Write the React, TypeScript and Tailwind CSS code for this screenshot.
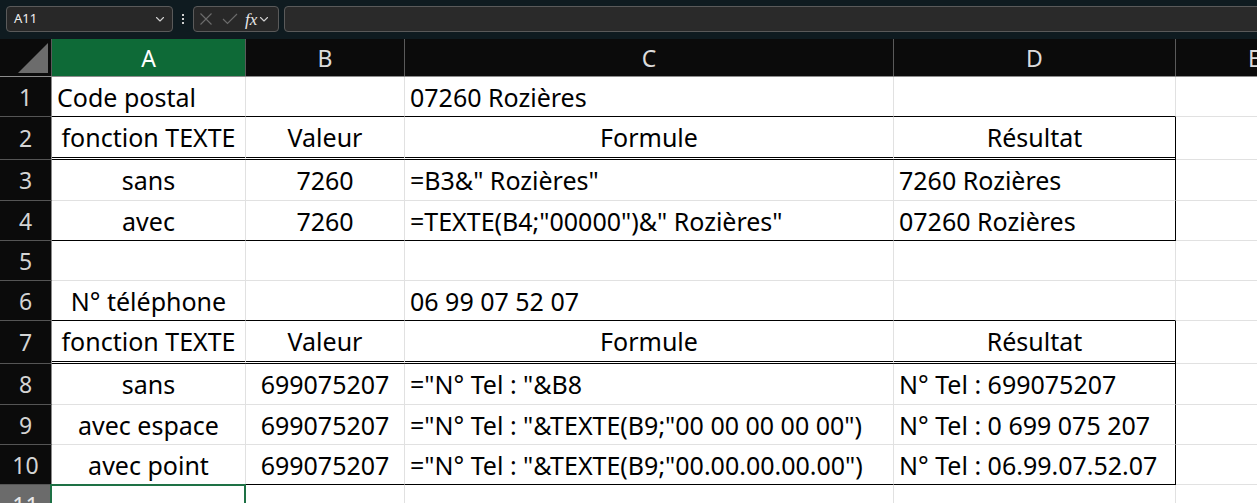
import React from "react";

const FONT = { fontFamily: '"Noto Sans", "Liberation Sans", sans-serif' };

type B = "g" | "k" | "d";
const BOTTOM: Record<B, string> = {
  g: "border-b border-b-[#e1e1e1]",
  k: "border-b border-b-black",
  d: "border-b-[3px] border-double border-b-black",
};
const RIGHT: Record<"g" | "k", string> = {
  g: "border-r border-r-[#e1e1e1]",
  k: "border-r border-r-black",
};
const WIDTHS = ["w-[194px]", "w-[159px]", "w-[489px]", "w-[282px]"];

type CellDef = { t?: string; a?: "l" | "c" };

function Cell({ def, w, b, r }: { def?: CellDef; w: string; b: B; r: "g" | "k" }) {
  const align = def?.a === "c" ? "justify-center" : "justify-start pl-[5px]";
  return (
    <div className={`${w} shrink-0 h-full flex items-center pt-[2px] ${align} ${BOTTOM[b]} ${RIGHT[r]} whitespace-nowrap overflow-visible text-black text-[25px]`}>
      {def?.t ?? ""}
    </div>
  );
}

function RowHead({ n, sel }: { n: number; sel?: boolean }) {
  return (
    <div
      className={`w-[52px] shrink-0 h-full flex items-center justify-center pt-[1px] border-r border-r-[#8a8a8a] border-b border-b-[#555555] text-[23px] ${
        sel ? "bg-[#6b6b6b] text-[#e8e8e8]" : "bg-[#0b0b0b] text-[#d4d4d4]"
      }`}
    >
      {n}
    </div>
  );
}

type RowDef = { h: string; b: B; rk: boolean; cells: (CellDef | undefined)[] };

const rows: RowDef[] = [
  { h: "h-[40px]", b: "k", rk: false, cells: [{ t: "Code postal" }, undefined, { t: "07260 Rozières" }, undefined] },
  { h: "h-[43px]", b: "d", rk: true, cells: [{ t: "fonction TEXTE", a: "c" }, { t: "Valeur", a: "c" }, { t: "Formule", a: "c" }, { t: "Résultat", a: "c" }] },
  { h: "h-[41px]", b: "g", rk: true, cells: [{ t: "sans", a: "c" }, { t: "7260", a: "c" }, { t: '=B3&" Rozières"' }, { t: "7260 Rozières" }] },
  { h: "h-[40px]", b: "k", rk: true, cells: [{ t: "avec", a: "c" }, { t: "7260", a: "c" }, { t: '=TEXTE(B4;"00000")&" Rozières"' }, { t: "07260 Rozières" }] },
  { h: "h-[40px]", b: "g", rk: false, cells: [undefined, undefined, undefined, undefined] },
  { h: "h-[40px]", b: "k", rk: false, cells: [{ t: "N° téléphone", a: "c" }, undefined, { t: "06 99 07 52 07" }, undefined] },
  { h: "h-[43px]", b: "d", rk: true, cells: [{ t: "fonction TEXTE", a: "c" }, { t: "Valeur", a: "c" }, { t: "Formule", a: "c" }, { t: "Résultat", a: "c" }] },
  { h: "h-[41px]", b: "g", rk: true, cells: [{ t: "sans", a: "c" }, { t: "699075207", a: "c" }, { t: '="N° Tel : "&B8' }, { t: "N° Tel : 699075207" }] },
  { h: "h-[40px]", b: "g", rk: true, cells: [{ t: "avec espace", a: "c" }, { t: "699075207", a: "c" }, { t: '="N° Tel : "&TEXTE(B9;"00 00 00 00 00")' }, { t: "N° Tel : 0 699 075 207" }] },
  { h: "h-[40px]", b: "k", rk: true, cells: [{ t: "avec point", a: "c" }, { t: "699075207", a: "c" }, { t: '="N° Tel : "&TEXTE(B9;"00.00.00.00.00")' }, { t: "N° Tel : 06.99.07.52.07" }] },
];

function Chevron({ className }: { className?: string }) {
  return (
    <svg className={className} width="12" height="12" viewBox="0 0 12 12" fill="none">
      <path d="M2.5 4.5 L6 8 L9.5 4.5" stroke="#d0d0d0" strokeWidth="1.1" strokeLinecap="round" strokeLinejoin="round" />
    </svg>
  );
}

function Toolbar() {
  return (
    <div className="h-[39px] bg-[#0f1b20] flex items-start pt-[6px] pl-[6px] overflow-hidden">
      <div className="w-[167px] h-[26px] shrink-0 rounded-[4px] border border-[#5a5a5a] bg-[#282828] flex items-center justify-between pl-[7px] pr-[6px]">
        <span className="text-[13px] text-[#f0f0f0]">A11</span>
        <Chevron />
      </div>
      <div className="w-[20px] h-[26px] shrink-0 flex flex-col items-center justify-center gap-[2px]">
        <span className="w-[2px] h-[2px] bg-[#d0d0d0]" />
        <span className="w-[2px] h-[2px] bg-[#d0d0d0]" />
        <span className="w-[2px] h-[2px] bg-[#d0d0d0]" />
      </div>
      <div className="w-[86px] h-[26px] shrink-0 rounded-[4px] border border-[#5a5a5a] bg-[#282828] flex items-center pl-[5px]">
        <svg width="14" height="14" viewBox="0 0 14 14" className="mr-[9px]">
          <path d="M1.5 1.5 L12.5 12.5 M12.5 1.5 L1.5 12.5" stroke="#6c6c6c" strokeWidth="1.1" />
        </svg>
        <svg width="16" height="14" viewBox="0 0 16 14" className="mr-[7px]">
          <path d="M1 7 L5.5 11.5 L15 2" stroke="#6c6c6c" strokeWidth="1.1" fill="none" />
        </svg>
        <span className="text-[17px] italic text-[#e8e8e8] leading-none" style={{ fontFamily: '"Liberation Serif", serif' }}>
          fx
        </span>
        <Chevron className="ml-[1px]" />
      </div>
      <div className="w-[1000px] h-[26px] shrink-0 ml-[5px] rounded-[4px] border border-[#5a5a5a] bg-[#2a2a2a]" />
    </div>
  );
}

function ColHeaders() {
  const heads = [
    { l: "A", w: "w-[194px]", sel: true },
    { l: "B", w: "w-[159px]" },
    { l: "C", w: "w-[489px]" },
    { l: "D", w: "w-[282px]" },
  ];
  return (
    <div className="h-[38px] flex bg-[#0b0b0b] border-b border-b-[#8c8c8c]">
      <div className="w-[52px] shrink-0 h-full relative border-r border-r-[#5a5a5a]">
        <svg className="absolute left-0 top-0" width="51" height="37" viewBox="0 0 51 37">
          <polygon points="48,4 48,34 18,34" fill="#6c6c6c" />
        </svg>
      </div>
      {heads.map((h) => (
        <div
          key={h.l}
          className={`${h.w} shrink-0 h-full flex items-center justify-center pt-[1px] border-r border-r-[#5a5a5a] text-[23px] ${
            h.sel ? "bg-[#0e6a37] text-white" : "text-[#dcdcdc]"
          }`}
        >
          {h.l}
        </div>
      ))}
      <div className="flex-1 h-full flex items-center pt-[1px] pl-[72px] text-[23px] text-[#dcdcdc]">E</div>
    </div>
  );
}

export default function App() {
  return (
    <div className="w-[1257px] h-[503px] overflow-hidden bg-white" style={FONT}>
      <Toolbar />
      <ColHeaders />
      {rows.map((r, i) => (
        <div key={i} className={`${r.h} flex`}>
          <RowHead n={i + 1} />
          {r.cells.map((c, j) => (
            <Cell key={j} def={c} w={WIDTHS[j]} b={r.b} r={j === 3 && r.rk ? "k" : "g"} />
          ))}
          <div className="flex-1 h-full border-b border-b-[#e1e1e1]" />
        </div>
      ))}
      <div className="h-[40px] flex">
        <RowHead n={11} sel />
        <div className="w-[194px] shrink-0 h-full relative border-r border-r-[#e1e1e1] border-b border-b-[#e1e1e1]">
          <div className="absolute left-[-2px] top-[-1px] right-[-1px] bottom-0 border-2 border-[#1e7145]" />
        </div>
        <div className="w-[159px] shrink-0 h-full border-r border-r-[#e1e1e1] border-b border-b-[#e1e1e1]" />
        <div className="w-[489px] shrink-0 h-full border-r border-r-[#e1e1e1] border-b border-b-[#e1e1e1]" />
        <div className="w-[282px] shrink-0 h-full border-r border-r-[#e1e1e1] border-b border-b-[#e1e1e1]" />
        <div className="flex-1 h-full border-b border-b-[#e1e1e1]" />
      </div>
    </div>
  );
}
